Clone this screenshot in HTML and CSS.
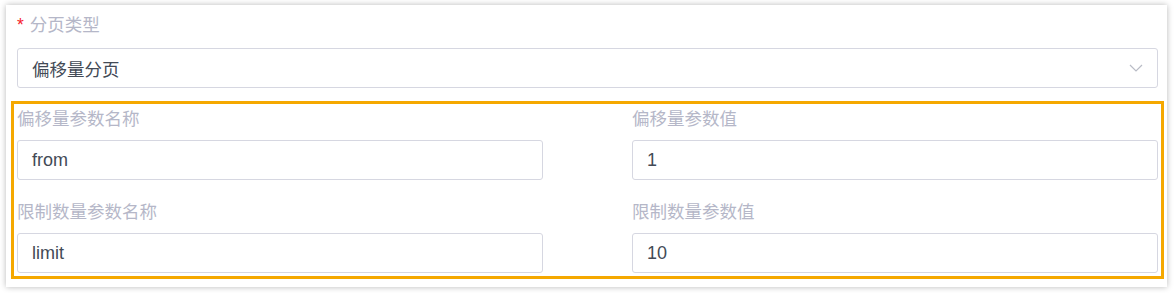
FILE: index.html
```html
<!DOCTYPE html>
<html lang="zh-CN">
<head>
    <meta charset="UTF-8">
    <title>分页设置</title>
    <link rel="stylesheet" href="styles.css">
</head>
<body>
    <div class="card">
        <!-- Type de pagination -->
        <div class="field">
            <label class="field-label"><span class="required">*</span>分页类型</label>
            <div class="select">
                <span class="select-value">偏移量分页</span>
                <svg class="chevron" width="14" height="8" viewBox="0 0 14 8">
                    <path d="M1 1 L7 7 L13 1" fill="none" stroke="#b9bcc6" stroke-width="1.2"/>
                </svg>
            </div>
        </div>

        <!-- Paramètres de l'offset -->
        <div class="highlight">
            <div class="grid">
                <div class="field">
                    <label class="field-label">偏移量参数名称</label>
                    <div class="input">from</div>
                </div>
                <div class="field">
                    <label class="field-label">偏移量参数值</label>
                    <div class="input">1</div>
                </div>
                <div class="field">
                    <label class="field-label">限制数量参数名称</label>
                    <div class="input">limit</div>
                </div>
                <div class="field">
                    <label class="field-label">限制数量参数值</label>
                    <div class="input">10</div>
                </div>
            </div>
        </div>
    </div>
</body>
</html>
```

FILE: styles.css
```css
body {
    margin: 0;
    padding: 5px 9px 7px 6px;
    background-color: #ffffff;
    font-family: "Liberation Sans", "Noto Sans CJK SC", sans-serif;
}

.card {
    background-color: #ffffff;
    box-shadow: 0px 0px 6px rgba(0, 0, 0, 0.28);
    padding: 8px 9px 8px 11px;
}

.field-label {
    display: block;
    height: 22px;
    font-size: 17.5px;
    line-height: 22px;
    color: #b5b7c8;
    font-family: "Noto Sans CJK SC", sans-serif;
}

.required {
    color: #f5222d;
    margin-right: 6px;
    font-family: "Liberation Sans", sans-serif;
}

.select {
    display: flex;
    align-items: center;
    justify-content: space-between;
    height: 38px;
    margin-top: 13px;
    padding: 0 14px 0 14px;
    border: 1px solid #d6d7e1;
    border-radius: 3px;
}

.select-value {
    font-size: 17.5px;
    color: #434a56;
    font-family: "Noto Sans CJK SC", sans-serif;
}

.highlight {
    margin: 13px -6px 0 -6px;
    padding: 3px;
    border: 3px solid #f5a800;
}

.grid {
    display: grid;
    grid-template-columns: 1fr 1fr;
    column-gap: 89px;
    row-gap: 20px;
}

.grid .field-label {
    margin-bottom: 11px;
}

.input {
    height: 38px;
    line-height: 38px;
    padding: 0 14px;
    border: 1px solid #d6d7e1;
    border-radius: 3px;
    font-size: 18px;
    color: #434a56;
}
```
